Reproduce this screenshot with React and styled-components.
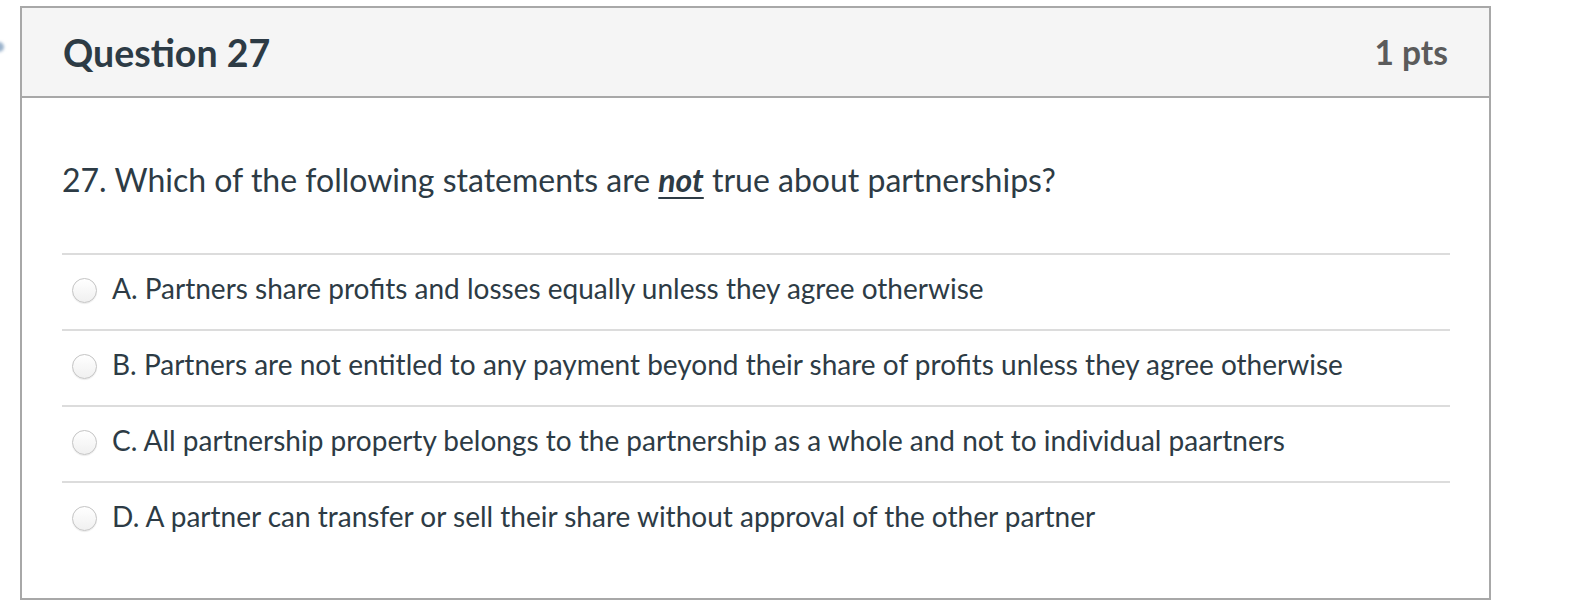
import React from 'react';
import styled, { createGlobalStyle } from 'styled-components';

const GlobalStyle = createGlobalStyle`
  body {
    margin: 0;
    background: #fff;
    font-family: Lato, "Open Sans", sans-serif;
  }
`;

const Page = styled.div`
  position: relative;
  padding: 6px 0 0 20px;
`;

const EdgeDot = styled.div`
  position: absolute;
  left: -6px;
  top: 42px;
  width: 10px;
  height: 10px;
  border-radius: 50%;
  background: #9bb3cc;
  filter: blur(1.5px);
`;

const Panel = styled.div`
  width: 1467px;
  border: 2px solid #a8a8a8;
  background: #fff;
`;

const Header = styled.div`
  display: flex;
  align-items: center;
  justify-content: space-between;
  height: 88px;
  padding: 0 41px 0 41px;
  background: #f5f5f5;
  border-bottom: 2px solid #a8a8a8;
`;

const Title = styled.h2`
  margin: 0;
  font-size: 37.5px;
  font-weight: 700;
  color: #2d3b45;
`;

const Points = styled.span`
  font-size: 33.5px;
  font-weight: 700;
  color: #5b5b5b;
`;

const Body = styled.div`
  padding: 62px 39px 41px 40px;
`;

const Prompt = styled.p`
  margin: 0 0 53px;
  font-size: 32px;
  line-height: 40px;
  color: #2d3b45;

  strong {
    font-style: italic;
    text-decoration: underline;
    text-decoration-thickness: 2px;
    text-underline-offset: 5px;
  }
`;

const Answer = styled.label`
  display: flex;
  align-items: center;
  gap: 15px;
  box-sizing: border-box;
  height: 76px;
  padding: 0 0 8px 10px;
  border-top: 2px solid #dcdcdc;
  font-size: 28px;
  color: #2d3b45;
`;

const Radio = styled.span`
  flex: none;
  width: 23px;
  height: 23px;
  margin-top: 5px;
  border-radius: 50%;
  border: 1px solid #c4c4c4;
  background: linear-gradient(#ffffff, #f0f0f0);
  box-shadow: 0 1px 1px rgba(0, 0, 0, 0.08);
`;

const answers = [
  'A. Partners share profits and losses equally unless they agree otherwise',
  'B. Partners are not entitled to any payment beyond their share of profits unless they agree otherwise',
  'C. All partnership property belongs to the partnership as a whole and not to individual paartners',
  'D. A partner can transfer or sell their share without approval of the other partner',
];

export default function App() {
  return (
    <>
      <GlobalStyle />
      <Page>
        <EdgeDot />
        <Panel>
          <Header>
            <Title>Question 27</Title>
            <Points>1 pts</Points>
          </Header>
          <Body>
            <Prompt>
              27. Which of the following statements are <strong>not</strong> true about partnerships?
            </Prompt>
            {answers.map((a) => (
              <Answer key={a}>
                <Radio />
                {a}
              </Answer>
            ))}
          </Body>
        </Panel>
      </Page>
    </>
  );
}
